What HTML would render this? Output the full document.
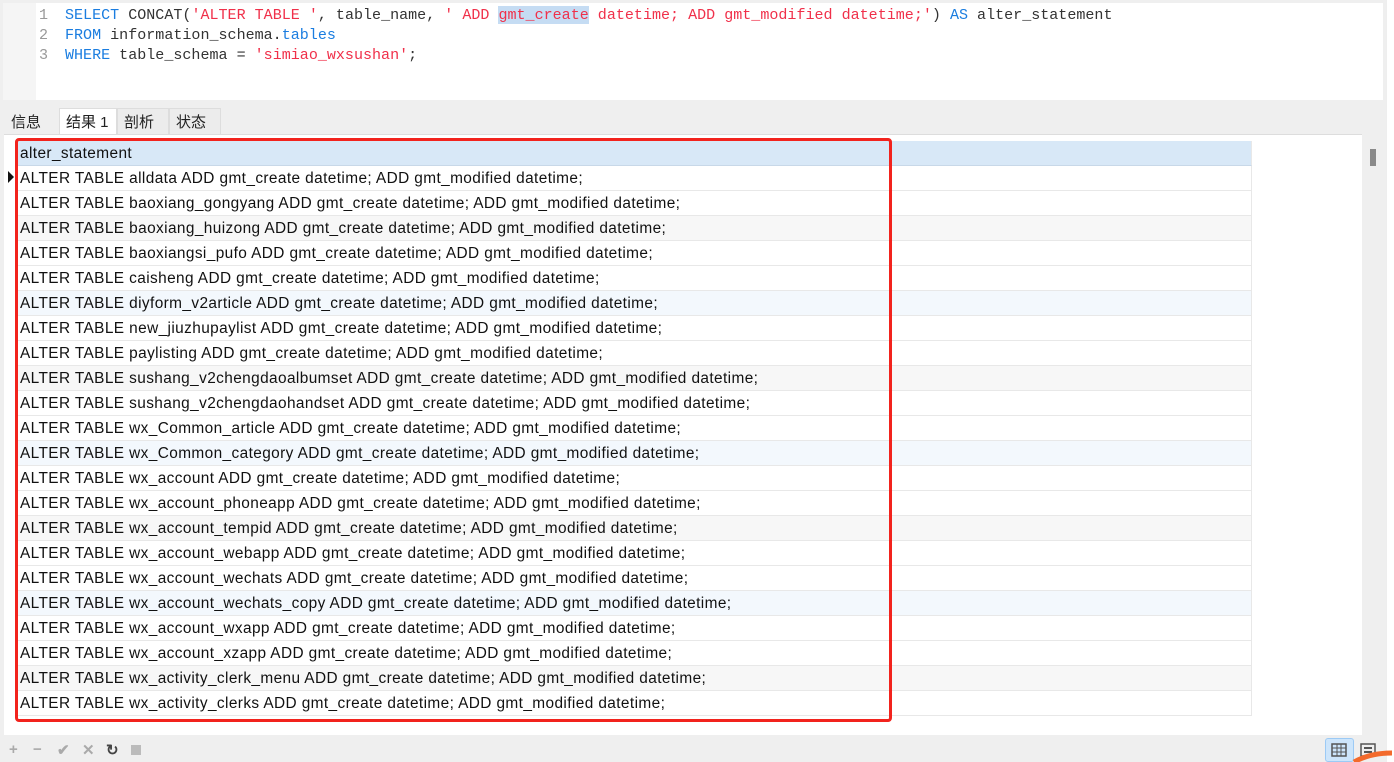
<!DOCTYPE html>
<html><head><meta charset="utf-8"><style>
*{margin:0;padding:0;box-sizing:border-box}
body{width:1394px;height:762px;background:#efefef;position:relative;overflow:hidden;font-family:"Liberation Sans","Noto Sans CJK SC",sans-serif}
.ed{position:absolute;left:3px;top:3px;width:1380px;height:97px;background:#fff}
.gut{position:absolute;left:0;top:0;width:33px;height:97px;background:#f5f5f5}
.code{position:absolute;left:4px;top:2px;font-family:"Liberation Mono",monospace;font-size:15.05px;line-height:20px;white-space:pre;color:#333}
.ln{display:inline-block;width:45px;text-align:right;padding-right:4px;color:#999;margin-right:13px}
.k{color:#1a7de0}.s{color:#f0304a}.hl{background:#c5dcf3}
.tabs{position:absolute;left:4px;top:108px;height:26px}
.tab{position:absolute;top:0;height:26px;font-size:15px;line-height:28px;padding:0 6px;background:#ececec;border:1px solid #ddd;border-bottom:none;color:#222}
.res{position:absolute;left:4px;top:134px;width:1358px;height:601px;background:#fff;border-top:1px solid #ddd}
.grid{position:absolute;left:15px;top:141px;width:1237px}
.row{height:25px;border-bottom:1px solid #e8e8e8;border-right:1px solid #e8e8e8;font-size:15.4px;letter-spacing:0.4px;line-height:25px;padding-left:5px;color:#111;white-space:nowrap}
.hd{background:#d8e8f7;border-bottom:1px solid #c8d8e8}
.g{background:#f7f7f7}.b{background:#f3f8fd}
.red{position:absolute;left:15px;top:138px;width:877px;height:584px;border:3px solid #f2231d;border-radius:4px}
.sb{position:absolute;left:1363px;top:134px;width:22px;height:601px;background:#efefef}
.th{position:absolute;left:1370px;top:149px;width:6px;height:17px;background:#8a8a8a}
.rs{position:absolute;left:1386px;top:0;width:8px;height:762px;background:#fff;border-left:1px solid #eee}
.bt{position:absolute;top:741px;font-size:15px;color:#aaa;font-weight:bold}
</style></head><body>
<div class="ed"><div class="gut"></div>
<div class="code"><span class="ln">1</span><span class="k">SELECT</span> CONCAT(<span class="s">'ALTER TABLE '</span>, table_name, <span class="s">' ADD <span class="hl">gmt_create</span> datetime; ADD gmt_modified datetime;'</span>) <span class="k">AS</span> alter_statement
<span class="ln">2</span><span class="k">FROM</span> information_schema.<span class="k">tables</span>
<span class="ln">3</span><span class="k">WHERE</span> table_schema = <span class="s">'simiao_wxsushan'</span>;</div></div>
<div class="tabs">
<div class="tab" style="left:0;width:54px;background:#efefef;border-color:#efefef">信息</div>
<div class="tab" style="left:55px;width:58px;background:#fff;height:27px">结果 1</div>
<div class="tab" style="left:113px;width:52px">剖析</div>
<div class="tab" style="left:165px;width:52px">状态</div>
</div>
<div class="res"></div>
<div class="grid">
<div class="row hd">alter_statement</div>
<div class="row">ALTER TABLE alldata ADD gmt_create datetime; ADD gmt_modified datetime;</div>
<div class="row">ALTER TABLE baoxiang_gongyang ADD gmt_create datetime; ADD gmt_modified datetime;</div>
<div class="row g">ALTER TABLE baoxiang_huizong ADD gmt_create datetime; ADD gmt_modified datetime;</div>
<div class="row">ALTER TABLE baoxiangsi_pufo ADD gmt_create datetime; ADD gmt_modified datetime;</div>
<div class="row">ALTER TABLE caisheng ADD gmt_create datetime; ADD gmt_modified datetime;</div>
<div class="row b">ALTER TABLE diyform_v2article ADD gmt_create datetime; ADD gmt_modified datetime;</div>
<div class="row">ALTER TABLE new_jiuzhupaylist ADD gmt_create datetime; ADD gmt_modified datetime;</div>
<div class="row">ALTER TABLE paylisting ADD gmt_create datetime; ADD gmt_modified datetime;</div>
<div class="row g">ALTER TABLE sushang_v2chengdaoalbumset ADD gmt_create datetime; ADD gmt_modified datetime;</div>
<div class="row">ALTER TABLE sushang_v2chengdaohandset ADD gmt_create datetime; ADD gmt_modified datetime;</div>
<div class="row">ALTER TABLE wx_Common_article ADD gmt_create datetime; ADD gmt_modified datetime;</div>
<div class="row b">ALTER TABLE wx_Common_category ADD gmt_create datetime; ADD gmt_modified datetime;</div>
<div class="row">ALTER TABLE wx_account ADD gmt_create datetime; ADD gmt_modified datetime;</div>
<div class="row">ALTER TABLE wx_account_phoneapp ADD gmt_create datetime; ADD gmt_modified datetime;</div>
<div class="row g">ALTER TABLE wx_account_tempid ADD gmt_create datetime; ADD gmt_modified datetime;</div>
<div class="row">ALTER TABLE wx_account_webapp ADD gmt_create datetime; ADD gmt_modified datetime;</div>
<div class="row">ALTER TABLE wx_account_wechats ADD gmt_create datetime; ADD gmt_modified datetime;</div>
<div class="row b">ALTER TABLE wx_account_wechats_copy ADD gmt_create datetime; ADD gmt_modified datetime;</div>
<div class="row">ALTER TABLE wx_account_wxapp ADD gmt_create datetime; ADD gmt_modified datetime;</div>
<div class="row">ALTER TABLE wx_account_xzapp ADD gmt_create datetime; ADD gmt_modified datetime;</div>
<div class="row g">ALTER TABLE wx_activity_clerk_menu ADD gmt_create datetime; ADD gmt_modified datetime;</div>
<div class="row">ALTER TABLE wx_activity_clerks ADD gmt_create datetime; ADD gmt_modified datetime;</div>
</div>
<div style="position:absolute;left:8px;top:171px;width:0;height:0;border-top:6px solid transparent;border-bottom:6px solid transparent;border-left:6px solid #111"></div>
<div class="red"></div>
<div class="sb"></div><div class="th"></div>
<div class="rs"></div>
<div class="bt" style="left:9px">+</div>
<div class="bt" style="left:33px">−</div>
<div class="bt" style="left:57px">✔</div>
<div class="bt" style="left:82px">✕</div>
<div class="bt" style="left:106px;color:#444">↻</div>
<div style="position:absolute;left:131px;top:745px;width:10px;height:10px;background:#bbb"></div>
<div style="position:absolute;left:1325px;top:738px;width:29px;height:24px;background:#cde5fb;border:1px solid #9ccaf5;border-radius:3px"></div>
<svg style="position:absolute;left:1331px;top:743px" width="16" height="14"><rect x="1" y="1" width="14" height="12" fill="none" stroke="#555" stroke-width="1.5"/><path d="M1 5H15M1 9H15M6 1V13M10 1V13" stroke="#555"/></svg>
<svg style="position:absolute;left:1360px;top:743px" width="16" height="14"><rect x="1" y="1" width="14" height="12" fill="none" stroke="#555" stroke-width="1.5"/><path d="M4 5H12M4 9H12" stroke="#555" stroke-width="2"/></svg>
<svg style="position:absolute;left:1352px;top:750px" width="42" height="12"><path d="M2 12 Q18 3 40 3" stroke="#f36a2c" stroke-width="5" fill="none"/></svg>
</body></html>
